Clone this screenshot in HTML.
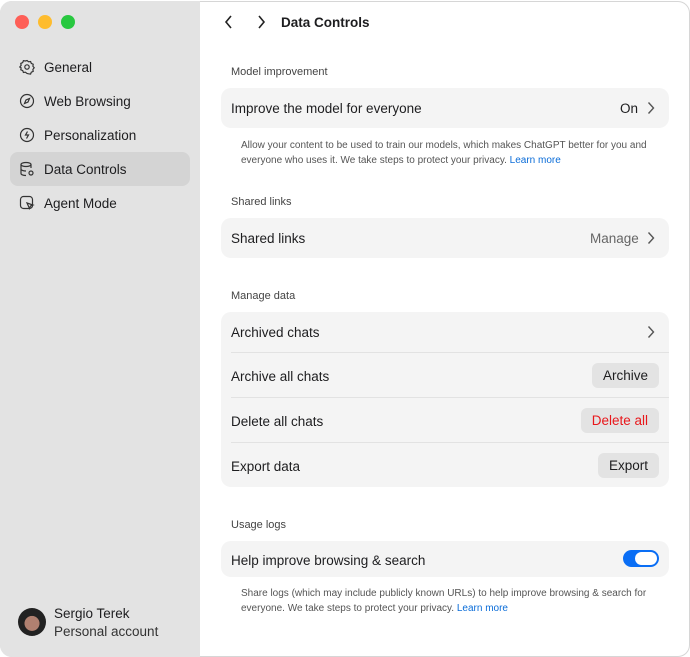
<!DOCTYPE html>
<html><head><style>
*{box-sizing:border-box;margin:0;padding:0}
body{width:690px;height:657px;background:#fff;font-family:"Liberation Sans",sans-serif;color:#1d1d1f;position:relative;overflow:hidden}
.win{position:absolute;left:0;top:1px;width:690px;height:656px;border-radius:12px;overflow:hidden;background:#fff;box-shadow:inset 0 0 0 1px #d6d6d6}
.side{position:absolute;left:0;top:0;width:200px;height:657px;background:#e3e3e3}
.dot{position:absolute;top:14px;width:14px;height:14px;border-radius:50%}
.nav{position:absolute;left:10px;width:180px;height:34px;border-radius:8px;font-size:13.5px;line-height:36px;padding-left:34px}
.nav svg{position:absolute;left:9px;top:9px}
.sel{background:#d4d4d4}
.t,.row,.sec,.note{transform:translateY(1px)}
.t{position:absolute;font-size:13.5px}
.sec{position:absolute;left:231px;font-size:11px;color:#444}
.card{position:absolute;left:221px;width:448px;background:#f4f4f4;border-radius:10px}
.row{position:absolute;left:10px;font-size:13.5px}
.note{position:absolute;left:241px;font-size:10px;color:#555;line-height:14.5px;width:415px}
.note a{color:#0a6cd8;text-decoration:none}
.btn{position:absolute;right:10px;height:25px;background:#e3e3e3;border-radius:6px;font-size:13.5px;line-height:26px;padding:0 11px}
.hr{position:absolute;left:10px;right:0;height:1px;background:#e2e2e2}
.chev{position:absolute;right:14px}
</style></head><body>
<div class="win">
<div class="side">
<div class="dot" style="left:15px;background:#fe5f57"></div>
<div class="dot" style="left:38px;background:#febc2e"></div>
<div class="dot" style="left:61px;background:#28c840"></div>
<div class="nav" style="top:49px"><svg width="16" height="16" viewBox="0 0 16 16" fill="none" stroke="#333" stroke-width="1.2"><path d="M8 1.5l1.6 1.3 2-.3.7 1.9 1.9.8-.3 2 1.3 1.6-1.3 1.6.3 2-1.9.8-.7 1.9-2-.3L8 14.5l-1.6-1.3-2 .3-.7-1.9-1.9-.8.3-2L.8 8l1.3-1.6-.3-2 1.9-.8.7-1.9 2 .3z"/><circle cx="8" cy="8" r="2.2"/></svg>General</div>
<div class="nav" style="top:83px"><svg width="16" height="16" viewBox="0 0 16 16" fill="none" stroke="#333" stroke-width="1.2"><circle cx="8" cy="8" r="6.5"/><path d="M10.5 5.5L9 9 5.5 10.5 7 7z"/></svg>Web Browsing</div>
<div class="nav" style="top:117px"><svg width="16" height="16" viewBox="0 0 16 16" fill="none" stroke="#333" stroke-width="1.2"><circle cx="8" cy="8" r="6.5"/><path d="M8.5 4.5L6.5 8h3l-2 3.5"/></svg>Personalization</div>
<div class="nav sel" style="top:151px"><svg width="16" height="16" viewBox="0 0 16 16" fill="none" stroke="#333" stroke-width="1.2"><ellipse cx="7" cy="3.5" rx="5" ry="2"/><path d="M2 3.5v9c0 1.1 2.2 2 5 2M12 3.5V7M2 8c0 1.1 2.2 2 5 2"/><circle cx="12" cy="12" r="2"/></svg>Data Controls</div>
<div class="nav" style="top:185px"><svg width="16" height="16" viewBox="0 0 16 16" fill="none" stroke="#333" stroke-width="1.2"><rect x="1.5" y="1.5" width="12" height="12" rx="3"/><path d="M8 8l6 2-2.5 1-1 2.5z" fill="#e3e3e3"/></svg>Agent Mode</div>
<div style="position:absolute;left:18px;top:607px;width:28px;height:28px;border-radius:50%;background:radial-gradient(circle at 50% 55%,#b08070 0 35%,#222 37%)"></div>
<div class="t" style="left:54px;top:604px">Sergio Terek</div>
<div class="t" style="left:54px;top:622px;color:#333">Personal account</div>
</div>
<svg style="position:absolute;left:224px;top:14px" width="10" height="14" viewBox="0 0 10 14" fill="none" stroke="#222" stroke-width="1.6"><path d="M7 1L2 7l5 6"/></svg>
<svg style="position:absolute;left:256px;top:14px" width="10" height="14" viewBox="0 0 10 14" fill="none" stroke="#222" stroke-width="1.6"><path d="M3 1l5 6-5 6"/></svg>
<div class="t" style="left:281px;top:13px;font-weight:bold">Data Controls</div>

<div class="sec" style="top:64px">Model improvement</div>
<div class="card" style="top:87px;height:40px">
<div class="row" style="top:12px">Improve the model for everyone</div>
<div class="row" style="top:12px;left:399px">On</div>
<svg class="chev" style="top:13px" width="8" height="14" viewBox="0 0 8 14" fill="none" stroke="#555" stroke-width="1.4"><path d="M1.5 1.5l5 5.5-5 5.5"/></svg>
</div>
<div class="note" style="top:137px">Allow your content to be used to train our models, which makes ChatGPT better for you and everyone who uses it. We take steps to protect your privacy. <a>Learn more</a></div>

<div class="sec" style="top:194px">Shared links</div>
<div class="card" style="top:217px;height:40px">
<div class="row" style="top:12px">Shared links</div>
<div class="row" style="top:12px;left:369px;color:#666">Manage</div>
<svg class="chev" style="top:13px" width="8" height="14" viewBox="0 0 8 14" fill="none" stroke="#555" stroke-width="1.4"><path d="M1.5 1.5l5 5.5-5 5.5"/></svg>
</div>

<div class="sec" style="top:288px">Manage data</div>
<div class="card" style="top:311px;height:175px">
<div class="row" style="top:12px">Archived chats</div>
<svg class="chev" style="top:13px" width="8" height="14" viewBox="0 0 8 14" fill="none" stroke="#555" stroke-width="1.4"><path d="M1.5 1.5l5 5.5-5 5.5"/></svg>
<div class="hr" style="top:40px"></div>
<div class="row" style="top:56px">Archive all chats</div>
<div class="btn" style="top:51px">Archive</div>
<div class="hr" style="top:85px"></div>
<div class="row" style="top:101px">Delete all chats</div>
<div class="btn" style="top:96px;color:#e8171b">Delete all</div>
<div class="hr" style="top:130px"></div>
<div class="row" style="top:146px">Export data</div>
<div class="btn" style="top:141px">Export</div>
</div>

<div class="sec" style="top:517px">Usage logs</div>
<div class="card" style="top:540px;height:36px">
<div class="row" style="top:11px">Help improve browsing &amp; search</div>
<div style="position:absolute;right:10px;top:9px;width:36px;height:17px;border-radius:9px;background:#0a6ef5"><div style="position:absolute;right:2px;top:2px;width:22px;height:13px;border-radius:7px;background:#fff"></div></div>
</div>
<div class="note" style="top:585px">Share logs (which may include publicly known URLs) to help improve browsing &amp; search for everyone. We take steps to protect your privacy. <a>Learn more</a></div>
</div>
</body></html>
